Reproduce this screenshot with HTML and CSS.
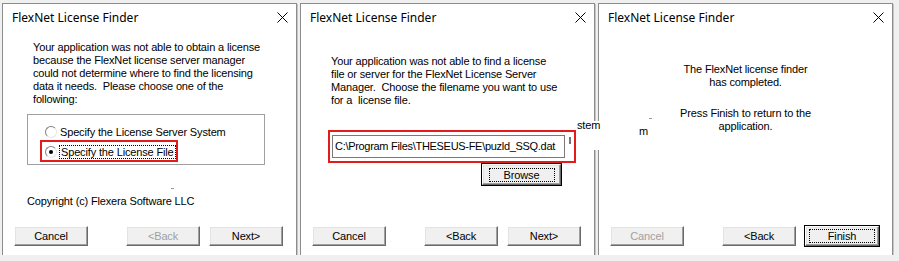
FILE: index.html
```html
<!DOCTYPE html>
<html lang="en">
<head>
    <meta charset="UTF-8" />
    <title>FlexNet License Finder</title>
    <link rel="stylesheet" href="styles.css">
</head>
<body>
    <div class="desk">
        <div class="dlg">
            <div class="title">
                <span>FlexNet License Finder</span>
                <svg class="close" width="11" height="11" viewBox="0 0 11 11"><path d="M0.5 0.5L10.5 10.5M10.5 0.5L0.5 10.5" stroke="#000" stroke-width="1"/></svg>
            </div>
            <div class="body">
                <p class="msg msg-one">Your application was not able to obtain a license<br>because the FlexNet license server manager<br>could not determine where to find the licensing<br>data it needs.&nbsp; Please choose one of the<br>following:</p>
                <div class="group">
                    <div class="radio-row"><span class="radio"></span><span class="label">Specify the License Server System</span></div>
                    <div class="radio-row"><span class="radio on"></span><span class="label focus">Specify the License File</span></div>
                    <span class="mark mark-radio"></span>
                </div>
                <span class="speck speck-one"></span>
                <p class="copy">Copyright (c) Flexera Software LLC</p>
            </div>
            <div class="buttons">
                <button class="btn">Cancel</button>
                <span class="fill"></span>
                <button class="btn" disabled>&lt;Back</button>
                <button class="btn">Next&gt;</button>
            </div>
        </div>

        <div class="dlg">
            <div class="title">
                <span>FlexNet License Finder</span>
                <svg class="close" width="11" height="11" viewBox="0 0 11 11"><path d="M0.5 0.5L10.5 10.5M10.5 0.5L0.5 10.5" stroke="#000" stroke-width="1"/></svg>
            </div>
            <div class="body">
                <p class="msg msg-two">Your application was not able to find a license<br>file or server for the FlexNet License Server<br>Manager.&nbsp; Choose the filename you want to use<br>for a&nbsp; license file.</p>
                <div class="file-row">
                    <div class="field">C:\Program Files\THESEUS-FE\puzld_SSQ.dat</div>
                    <span class="tick"></span>
                    <span class="mark mark-file"></span>
                </div>
                <div class="browse-row">
                    <button class="btn btn-default btn-browse"><span class="focus">Browse</span></button>
                </div>
            </div>
            <div class="buttons">
                <button class="btn">Cancel</button>
                <span class="fill"></span>
                <button class="btn">&lt;Back</button>
                <button class="btn">Next&gt;</button>
            </div>
        </div>

        <div class="dlg">
            <div class="title">
                <span>FlexNet License Finder</span>
                <svg class="close" width="11" height="11" viewBox="0 0 11 11"><path d="M0.5 0.5L10.5 10.5M10.5 0.5L0.5 10.5" stroke="#000" stroke-width="1"/></svg>
            </div>
            <div class="body">
                <p class="msg msg-three">The FlexNet license finder<br>has completed.</p>
                <p class="msg msg-four">Press Finish to return to the<br>application.</p>
                <span class="stray stray-m">m</span>
                <span class="speck speck-three"></span>
            </div>
            <div class="buttons">
                <button class="btn" disabled>Cancel</button>
                <span class="fill"></span>
                <button class="btn">&lt;Back</button>
                <button class="btn btn-default"><span class="focus">Finish</span></button>
            </div>
        </div>

        <div class="ghost">stem</div>
    </div>
</body>
</html>
```

FILE: styles.css
```css
body {
    margin: 0;
    background: #f0f0f0;
    font-family: 'Liberation Sans', Arial, sans-serif;
    font-size: 11px;
    letter-spacing: -0.15px;
    color: #000;
}
.desk {
    position: relative;
    display: flex;
    gap: 3px;
    padding: 3px 2px;
    width: 895px;
    height: 255px;
    box-sizing: border-box;
}
.dlg {
    position: relative;
    width: 294px;
    height: 252px;
    border: 1px solid #8c8c8c;
    background: #fff;
    box-shadow: 1px 1px 0 #c6c6c6;
    display: flex;
    flex-direction: column;
}
.title {
    height: 27px;
    display: flex;
    align-items: center;
    justify-content: space-between;
    padding: 0 8px 0 9px;
    font-family: 'Noto Sans', sans-serif;
    font-size: 12px;
    letter-spacing: 0;
}
.body {
    position: relative;
    flex: 1;
}
.msg {
    margin: 0;
    line-height: 13px;
}
.msg-one {
    margin: 10px 0 0 30px;
}
.msg-two {
    margin: 24px 0 0 30px;
}
.msg-three {
    margin: 32px 0 0;
    text-align: center;
}
.msg-four {
    margin: 18px 0 0;
    text-align: center;
}
.group {
    position: relative;
    margin: 8px 0 0 24px;
    width: 236px;
    height: 42px;
    border: 1px solid #a0a0a0;
    padding-top: 7px;
}
.radio-row {
    display: flex;
    align-items: center;
    gap: 3px;
    height: 20px;
    padding-left: 17px;
}
.radio {
    width: 10px;
    height: 10px;
    border-radius: 50%;
    border: 1px solid;
    border-color: #808080 #e6e6e6 #e6e6e6 #808080;
    background: #fff;
    position: relative;
}
.radio.on::after {
    content: "";
    position: absolute;
    left: 3px;
    top: 3px;
    width: 4px;
    height: 4px;
    border-radius: 50%;
    background: #000;
}
.focus {
    outline: 1px dotted #000;
    outline-offset: 0;
    padding: 0 1px;
}
.mark {
    position: absolute;
    border: 2px solid #e31b1b;
}
.mark-radio {
    left: 12px;
    top: 25px;
    width: 134px;
    height: 18px;
}
.speck {
    position: absolute;
    width: 3px;
    height: 1px;
    background: #999;
}
.speck-one {
    left: 168px;
    top: 157px;
}
.speck-three {
    left: 50px;
    top: 87px;
}
.copy {
    margin: 30px 0 0 24px;
}
.file-row {
    position: relative;
    margin: 28px 0 0 31px;
    display: flex;
    align-items: center;
}
.field {
    width: 229px;
    height: 21px;
    border: 1px solid #7a7a7a;
    padding-left: 2px;
    line-height: 21px;
    white-space: nowrap;
    overflow: hidden;
    letter-spacing: -0.3px;
}
.tick {
    margin-left: 4px;
    width: 2px;
    height: 7px;
    background: #777;
    align-self: flex-start;
    margin-top: 2px;
}
.mark-file {
    left: -4px;
    top: -5px;
    width: 244px;
    height: 29px;
}
.browse-row {
    display: flex;
    justify-content: flex-end;
    padding-right: 33px;
    margin-top: 6px;
}
.buttons {
    display: flex;
    align-items: center;
    gap: 9px;
    padding: 0 13px 0 11px;
    margin-bottom: 10px;
}
.fill {
    flex: 1;
}
.btn {
    width: 74px;
    height: 20px;
    padding: 0;
    font-family: 'Liberation Sans', Arial, sans-serif;
    font-size: 11px;
    letter-spacing: -0.15px;
    color: #000;
    background: #f0f0f0;
    border: 1px solid;
    border-color: #fff #696969 #696969 #fff;
    box-shadow: inset -1px -1px 0 #a0a0a0, inset 1px 1px 0 #e3e3e3;
}
.btn:disabled {
    color: #a0a0a0;
}
.btn-default {
    outline: 1px solid #000;
    outline-offset: 0;
}
.btn-default .focus {
    display: inline-block;
    width: 62px;
    line-height: 12px;
}
.btn-browse {
    width: 79px;
    height: 21px;
}
.stray {
    position: absolute;
}
.stray-m {
    left: 40px;
    top: 94px;
}
.ghost {
    position: absolute;
    left: 577px;
    top: 121px;
    width: 36px;
    height: 29px;
    background: #fff;
    line-height: 9px;
}
```
